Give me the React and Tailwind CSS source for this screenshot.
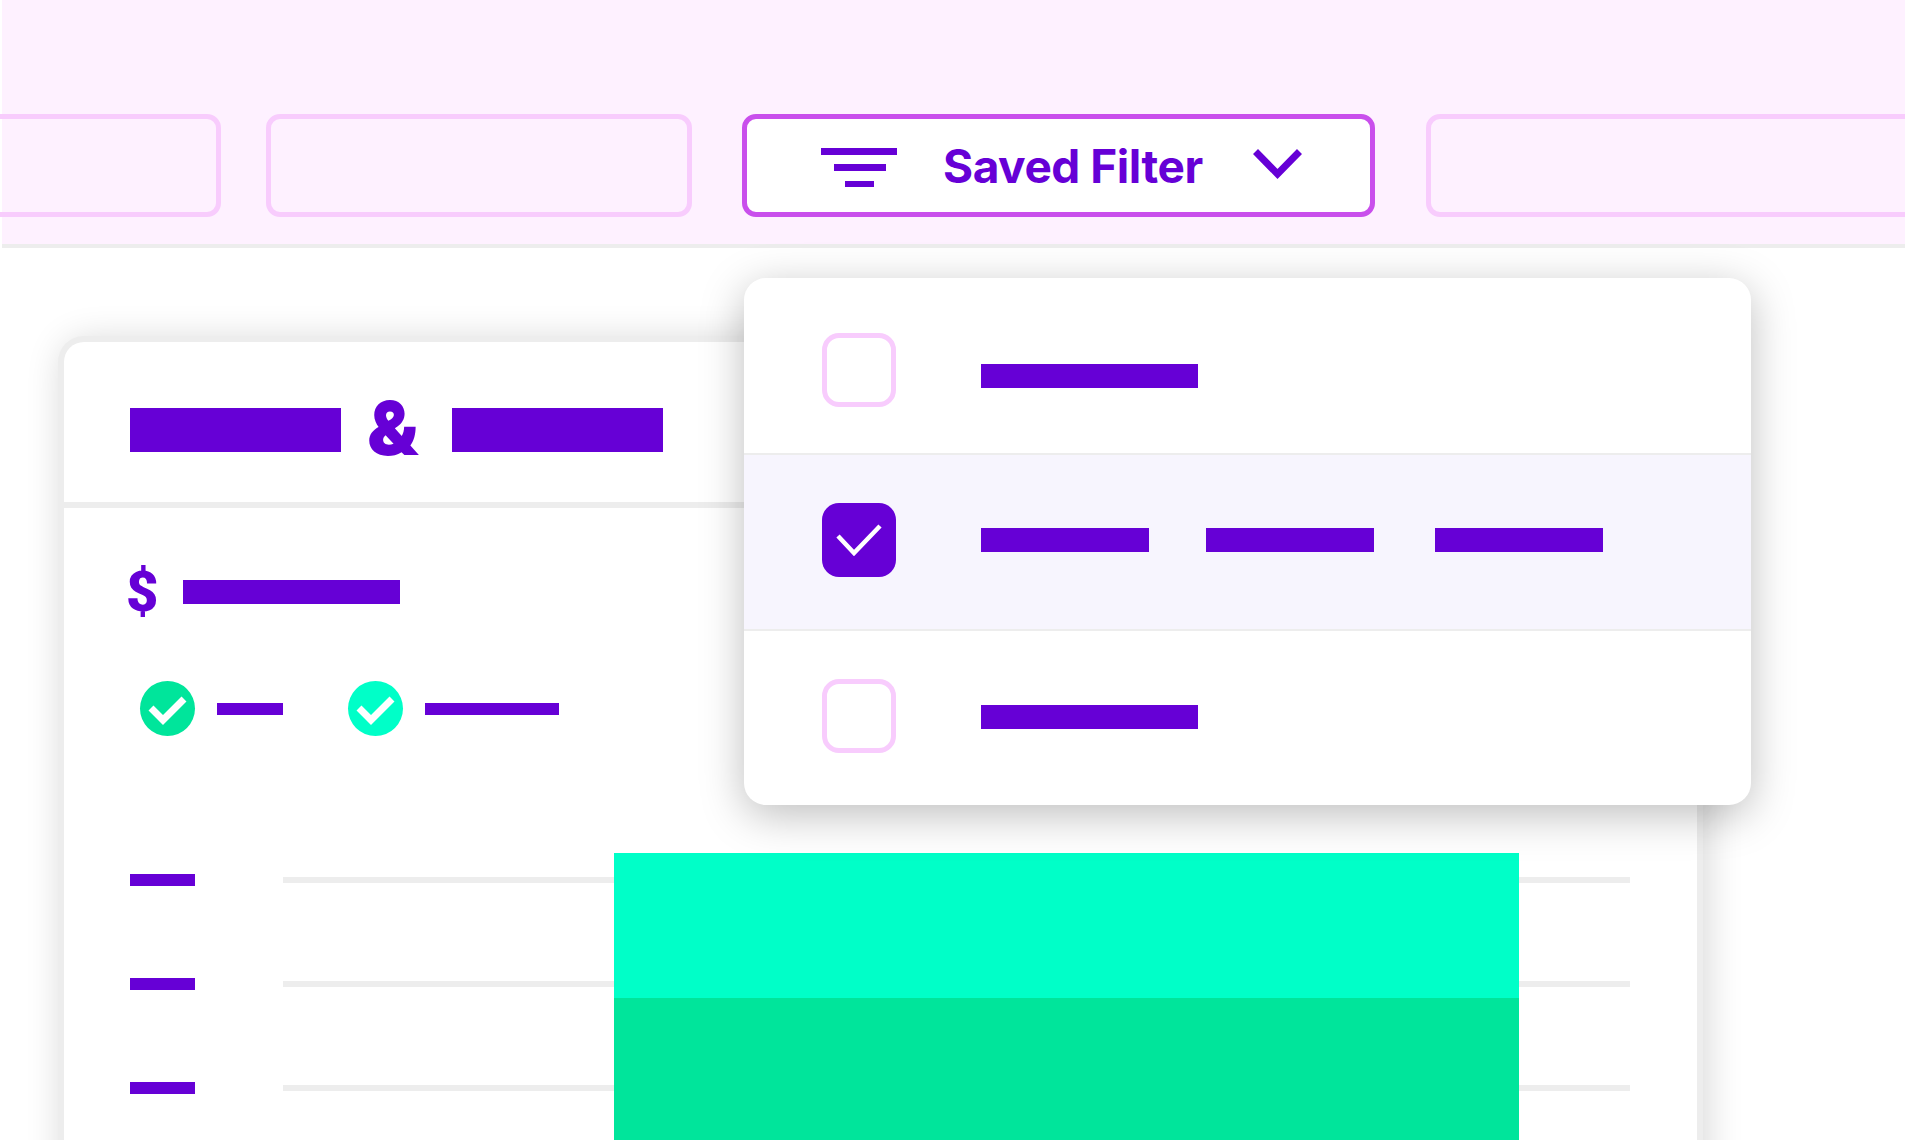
import React from "react";

const ink = "bg-[#6600d6]";

const Bar = ({ className }) => <div className={`${ink} ${className}`} />;

const FilterIcon = () => (
  <svg width="76" height="39" viewBox="0 0 76 39" className="shrink-0 mt-[4px]">
    <rect x="0" y="0" width="76" height="7" fill="#6600d6" />
    <rect x="13" y="16" width="52" height="7" fill="#6600d6" />
    <rect x="24" y="33" width="29" height="6" fill="#6600d6" />
  </svg>
);

const Chevron = () => (
  <svg width="49" height="30" viewBox="0 0 49 30" className="shrink-0 mt-[-4px]">
    <path d="M2.5 2.5 L24.5 25 L46.5 2.5" fill="none" stroke="#6600d6" strokeWidth="7" />
  </svg>
);

const CheckCircle = ({ className }) => (
  <div className={`w-[55px] h-[55px] rounded-full shrink-0 ${className}`}>
    <svg width="55" height="55" viewBox="0 0 55 55">
      <path d="M11 27 L23 39 L44 18" fill="none" stroke="#fff" strokeWidth="7" />
    </svg>
  </div>
);

const EmptyBox = ({ className = "" }) => (
  <div className={`w-[74px] h-[74px] rounded-[17px] border-[5px] border-[#f8ccfd] bg-white shrink-0 ${className}`} />
);

const ChartRow = () => (
  <div className="flex items-center h-[12px]">
    <Bar className="w-[65px] h-[12px] shrink-0" />
    <div className="ml-[88px] w-[1347px] h-[6px] bg-[#ededed]" />
  </div>
);

export default function App() {
  return (
    <div className="relative w-[1905px] h-[1140px] overflow-hidden bg-white font-['Inter',sans-serif] [font-optical-sizing:none]">
      {/* Filter strip */}
      <header className="ml-[2px] h-[248px] bg-[#fef1ff] border-b-4 border-[#ededed] pt-[114px] flex gap-[50px]">
        <div className="ml-[-62px] mr-[-5px] w-[281px] h-[103px] rounded-[14px] border-[5px] border-[#f8ccfd] shrink-0" />
        <div className="w-[426px] h-[103px] rounded-[14px] border-[5px] border-[#f8ccfd] shrink-0" />
        <div className="w-[633px] h-[103px] rounded-[14px] border-[5px] border-[#c94fec] bg-white shrink-0 flex items-center pl-[74px]">
          <FilterIcon />
          <span className="ml-[46px] w-[261px] text-[46px] leading-none font-bold tracking-[-0.01em] text-[#6600d6] whitespace-nowrap">Saved Filter</span>
          <div className="ml-[49px]">
            <Chevron />
          </div>
        </div>
        <div className="ml-[1px] w-[600px] h-[103px] rounded-[14px] border-[5px] border-[#f8ccfd] shrink-0" />
      </header>

      {/* Card behind the dropdown */}
      <section className="mt-[88px] ml-[58px] w-[1645px] h-[900px] rounded-t-[26px] border-[6px] border-b-0 border-[#ededed] bg-white shadow-[4px_4px_36px_rgba(0,0,0,0.16)]">
        <div className="h-[166px] border-b-[6px] border-[#ededed] pl-[66px] pt-[16px] flex items-center">
          <Bar className="w-[211px] h-[44px]" />
          <span className="ml-[26px] mt-[-4px] w-[55px] text-[74px] leading-none font-black text-[#6600d6]">&amp;</span>
          <Bar className="ml-[30px] w-[211px] h-[44px]" />
        </div>
        <div className="pl-[66px] pt-[59px]">
          <div className="flex items-center h-[49px]">
            <span className="ml-[-4px] w-[33px] text-[56px] leading-none font-black font-['Roboto',sans-serif] text-[#6600d6]">$</span>
            <Bar className="ml-[24px] w-[217px] h-[24px]" />
          </div>
          <div className="mt-[65px] ml-[10px] flex items-center">
            <CheckCircle className="bg-[#00e59b]" />
            <Bar className="ml-[22px] w-[66px] h-[12px]" />
            <div className="ml-[65px]">
              <CheckCircle className="bg-[#00ffc8]" />
            </div>
            <Bar className="ml-[22px] w-[134px] h-[12px]" />
          </div>
          <div className="mt-[138px] flex flex-col gap-[92px]">
            <ChartRow />
            <ChartRow />
            <ChartRow />
          </div>
        </div>
      </section>

      {/* Stacked chart block */}
      <div className="absolute left-[614px] top-[853px] w-[905px] h-[287px] flex flex-col">
        <div className="h-[145px] bg-[#00ffc8]" />
        <div className="flex-1 bg-[#00e59b]" />
      </div>

      {/* Saved filter dropdown */}
      <div className="absolute left-[744px] top-[278px] w-[1007px] h-[527px] rounded-[22px] bg-white shadow-[0_10px_44px_rgba(0,0,0,0.26)] overflow-hidden flex flex-col">
        <div className="h-[175px] flex items-center pl-[78px]">
          <EmptyBox className="mt-[9px]" />
          <Bar className="ml-[85px] mt-[20px] w-[217px] h-[24px]" />
        </div>
        <div className="h-[178px] bg-[#f7f5fe] border-y-2 border-[#ededed] flex items-center pl-[78px] pb-[4px]">
          <div className="w-[74px] h-[74px] rounded-[17px] bg-[#6600d6] shrink-0 flex items-center justify-center">
            <svg width="46" height="32" viewBox="0 0 46 32">
              <path d="M2 12 L18 29 L44 2" fill="none" stroke="#fff" strokeWidth="4.5" />
            </svg>
          </div>
          <Bar className="ml-[85px] w-[168px] h-[24px]" />
          <Bar className="ml-[57px] w-[168px] h-[24px]" />
          <Bar className="ml-[61px] w-[168px] h-[24px]" />
        </div>
        <div className="flex-1 flex items-center pl-[78px]">
          <EmptyBox className="mb-[5px]" />
          <Bar className="ml-[85px] mb-[2px] w-[217px] h-[24px]" />
        </div>
      </div>
    </div>
  );
}
